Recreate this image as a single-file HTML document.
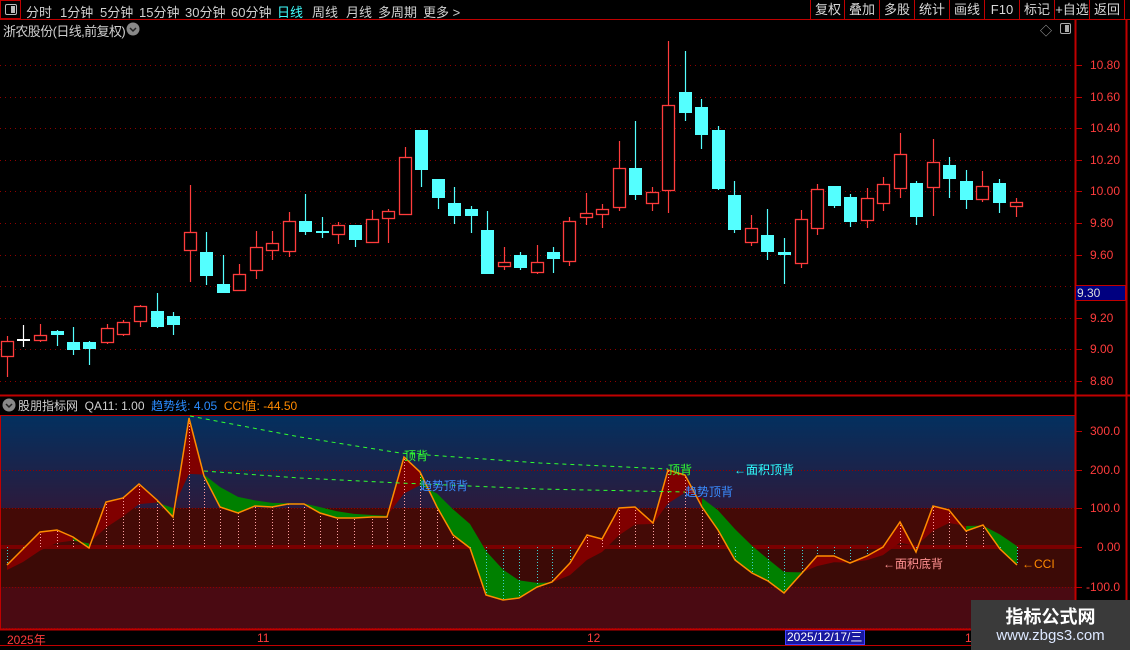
<!DOCTYPE html>
<html><head><meta charset="utf-8">
<style>
*{margin:0;padding:0;box-sizing:border-box}
body{width:1130px;height:650px;background:#000;overflow:hidden;position:relative;font-family:"Liberation Sans","Noto Sans CJK SC",sans-serif;font-size:13px;color:#c8c8c8}
.a{position:absolute;white-space:nowrap}
#top{position:absolute;left:0;top:0;width:1130px;height:20px;border-bottom:1px solid #c00000}
.mi{position:absolute;top:2px;font-size:13px;color:#d0d0d0}
.bt{position:absolute;top:0;height:19px;border-left:1px solid #c00000;text-align:center;font-size:13px;line-height:19px;color:#d8d8d8}
.pl{position:absolute;left:1090px;color:#ff3c3c;font-size:12px}
.il{position:absolute;left:1090px;color:#ff3c3c;font-size:12px}
</style></head><body>
<div id="top">
 <div class="a" style="left:0;top:0;width:21px;height:19px;border:1px solid #c00000"></div>
 <div class="a" style="left:5px;top:4px;width:12px;height:11px;border:1px solid #bbb;border-radius:2px"><div style="position:absolute;right:1px;top:1px;width:4px;height:7px;background:#bbb"></div></div>
 <span class="mi" style="left:26px">分时</span>
 <span class="mi" style="left:60px">1分钟</span>
 <span class="mi" style="left:100px">5分钟</span>
 <span class="mi" style="left:139px">15分钟</span>
 <span class="mi" style="left:185px">30分钟</span>
 <span class="mi" style="left:231px">60分钟</span>
 <span class="mi" style="left:277px;color:#40ffff">日线</span>
 <span class="mi" style="left:312px">周线</span>
 <span class="mi" style="left:346px">月线</span>
 <span class="mi" style="left:378px">多周期</span>
 <span class="mi" style="left:423px">更多 &gt;</span>
 <div class="bt" style="left:810px;width:35px">复权</div>
 <div class="bt" style="left:844px;width:35px">叠加</div>
 <div class="bt" style="left:879px;width:35px">多股</div>
 <div class="bt" style="left:914px;width:35px">统计</div>
 <div class="bt" style="left:949px;width:35px">画线</div>
 <div class="bt" style="left:984px;width:35px">F10</div>
 <div class="bt" style="left:1019px;width:35px">标记</div>
 <div class="bt" style="left:1054px;width:35px">+自选</div>
 <div class="bt" style="left:1089px;width:36px;border-right:1px solid #c00000">返回</div>
</div>
<div class="a" style="left:3px;top:21px;font-size:13px;color:#d0d0d0;letter-spacing:-0.6px">浙农股份(日线,前复权)</div>
<svg class="a" style="left:126px;top:22px" width="14" height="14"><circle cx="7" cy="7" r="6.5" fill="#888"/><polyline points="4,6 7,9 10,6" fill="none" stroke="#222" stroke-width="1.5"/></svg>
<div class="a" style="left:1040px;top:22px;color:#aaa;font-size:12px">◇</div>
<div class="a" style="left:1060px;top:23px;width:11px;height:11px;border:1px solid #aaa;border-radius:2px"><div style="position:absolute;right:1px;top:1px;width:4px;height:7px;background:#aaa"></div></div>

<svg class="a" style="left:0;top:0" width="1130" height="650" id="sv"></svg>

<div class="pl" style="top:58px">10.80</div>
<div class="pl" style="top:90px">10.60</div>
<div class="pl" style="top:121px">10.40</div>
<div class="pl" style="top:153px">10.20</div>
<div class="pl" style="top:184px">10.00</div>
<div class="pl" style="top:216px">9.80</div>
<div class="pl" style="top:248px">9.60</div>
<div class="pl" style="top:311px">9.20</div>
<div class="pl" style="top:342px">9.00</div>
<div class="pl" style="top:374px">8.80</div>
<div class="a" style="left:1075px;top:285px;width:51px;height:16px;background:#000080;border:1px solid #c00000;color:#ddd;font-size:12px;padding-left:1px;line-height:14px">9.30</div>

<svg class="a" style="left:2px;top:398px" width="14" height="14"><circle cx="7" cy="7" r="6.5" fill="#888"/><polyline points="4,6 7,9 10,6" fill="none" stroke="#222" stroke-width="1.5"/></svg>
<div class="a" style="left:18px;top:397px;font-size:12px;color:#d0d0d0">股朋指标网 &nbsp;QA11: 1.00 &nbsp;<span style="color:#2a8cff">趋势线: 4.05</span> &nbsp;<span style="color:#ff8a00">CCI值: -44.50</span></div>

<div class="il" style="top:424px">300.0</div>
<div class="il" style="top:463px">200.0</div>
<div class="il" style="top:501px">100.0</div>
<div class="il" style="top:540px;left:1097px">0.00</div>
<div class="il" style="top:580px;left:1086px">-100.0</div>

<div class="a" style="left:404px;top:447px;color:#30ff30;font-size:12px">顶背</div>
<div class="a" style="left:668px;top:461px;color:#30ff30;font-size:12px">顶背</div>
<div class="a" style="left:420px;top:477px;color:#3a8cff;font-size:12px">趋势顶背</div>
<div class="a" style="left:685px;top:483px;color:#3a8cff;font-size:12px">趋势顶背</div>
<div class="a" style="left:734px;top:461px;color:#30ffff;font-size:12px">←面积顶背</div>
<div class="a" style="left:883px;top:555px;color:#ff9090;font-size:12px">←面积底背</div>
<div class="a" style="left:1022px;top:557px;color:#ff8a00;font-size:12px">←CCI</div>

<div class="a" style="left:7px;top:631px;color:#ff3c3c;font-size:12px">2025年</div>
<div class="a" style="left:257px;top:631px;color:#ff3c3c;font-size:12px">11</div>
<div class="a" style="left:587px;top:631px;color:#ff3c3c;font-size:12px">12</div>
<div class="a" style="left:785px;top:630px;width:80px;height:15px;background:#1818a0;border:1px solid #4040ff;color:#fff;font-size:12px;line-height:13px;padding-left:1px">2025/12/17/三</div>
<div class="a" style="left:965px;top:631px;color:#ff3c3c;font-size:12px">1</div>

<div class="a" style="left:971px;top:600px;width:159px;height:50px;background:#3a3a3a"></div>
<div class="a" style="left:971px;top:603px;width:159px;text-align:center;color:#fff;font-size:18px;font-weight:bold">指标公式网</div>
<div class="a" style="left:971px;top:627px;width:159px;text-align:center;color:#dde8ff;font-size:15px">www.zbgs3.com</div>

<script>
var S=document.getElementById('sv'),h='';
function R(x,y,w,hh,f){h+='<rect x="'+x+'" y="'+y+'" width="'+w+'" height="'+hh+'" fill="'+f+'"/>';}
function L(x1,y1,x2,y2,c,w,d){h+='<line x1="'+x1+'" y1="'+y1+'" x2="'+x2+'" y2="'+y2+'" stroke="'+c+'" stroke-width="'+(w||1)+'"'+(d?' stroke-dasharray="'+d+'"':'')+'/>';}
h+='<defs><linearGradient id="g" x1="0" y1="0" x2="0" y2="1"><stop offset="0" stop-color="#03305f"/><stop offset="1" stop-color="#2c1a3c"/></linearGradient></defs>';
R(0,416,1075,92,'url(#g)');R(0,508,1075,39,'#440a06');R(0,547,1075,40,'#3c0a06');R(0,587,1075,42,'#4a0a12');
R(0,545,1075,4,'#7a0000');
[65,97,128,160,191,223,255,286,318,349,381].forEach(function(y){L(0,y+.5,1075,y+.5,'#900000',1,'1 4');});
[470,508,587,628].forEach(function(y){L(0,y+.5,1075,y+.5,'#900000',1,'1 2');});
L(1075.5,20,1075.5,650,'#c00000',2);L(1126.5,20,1126.5,650,'#c00000',2);
L(0,395.5,1130,395.5,'#c00000',2);L(0,415.5,1075,415.5,'#c00000',1);
L(0,629.5,1130,629.5,'#c00000',2);L(0,645.5,1130,645.5,'#c00000',1);
L(0.5,416,0.5,630,'#c00000',1);
[431,470,508,547,587].forEach(function(y){L(1075,y+.5,1082,y+.5,'#c00000',1)});
[65,97,128,160,191,223,255,286,318,349,381].forEach(function(y){L(1075,y+.5,1082,y+.5,'#c00000',1)});
var C=[[7,'r',341,356,336,377],[23,'w',339,340,325,347],[40,'r',335,340,324,342],[57,'c',331,335,330,346],[73,'c',342,350,327,355],[89,'c',342,349,341,365],[107,'r',328,342,324,344],[123,'r',322,334,320,336],[140,'r',306,321,305,327],[157,'c',311,327,293,328],[173,'c',316,325,312,335],[190,'r',232,250,185,282],[206,'c',252,276,232,285],[223,'c',284,293,255,293],[239,'r',274,290,264,290],[256,'r',247,270,231,279],[272,'r',243,250,231,260],[289,'r',221,251,212,257],[305,'c',221,232,194,235],[322,'c',231,233,217,238],[338,'r',225,234,222,244],[355,'c',225,240,225,247],[372,'r',219,242,210,242],[388,'r',211,218,209,243],[405,'r',157,214,147,214],[421,'c',130,170,130,187],[438,'c',179,198,179,209],[454,'c',203,216,187,224],[471,'c',209,216,206,233],[487,'c',230,274,211,274],[504,'r',262,266,247,270],[520,'c',255,268,252,270],[537,'r',262,272,245,274],[553,'c',252,259,247,273],[569,'r',221,261,217,266],[586,'r',213,217,193,225],[602,'r',209,214,204,228],[619,'r',168,207,141,211],[635,'c',168,195,121,200],[652,'r',192,203,187,211],[668,'r',105,190,41,213],[685,'c',92,113,51,121],[701,'c',107,135,99,149],[718,'c',130,189,126,190],[734,'c',195,230,181,233],[751,'r',228,242,215,246],[767,'c',235,252,209,260],[784,'c',252,255,238,284],[801,'r',219,263,210,268],[817,'r',189,228,184,235],[834,'c',186,206,186,208],[850,'c',197,222,194,227],[867,'r',198,220,188,228],[883,'r',184,203,177,211],[900,'r',154,188,133,198],[916,'c',183,217,181,225],[933,'r',162,187,139,216],[949,'c',165,179,157,198],[966,'c',181,200,170,209],[982,'r',186,199,171,202],[999,'c',183,203,179,213],[1016,'r',202,206,198,217]];
C.forEach(function(c){var x=c[0],col=c[1]=='r'?'#ff3c3c':(c[1]=='c'?'#54ffff':'#ffffff');
 if(c[1]=='r'){L(x+.5,c[4],x+.5,c[2],col,1.2);L(x+.5,c[3],x+.5,c[5],col,1.2);
  h+='<rect x="'+(x-5.5)+'" y="'+(c[2]+.5)+'" width="12" height="'+Math.max(c[3]-c[2],1)+'" fill="#000" stroke="'+col+'" stroke-width="1.3"/>';}
 else{L(x+.5,c[4],x+.5,c[5],col,1.2);R(x-6,c[2],13,Math.max(c[3]-c[2],2),col);}
});
var P=[[7,565],[23,549],[40,532],[57,530],[73,537],[89,548],[106,502],[123,498],[139,484],[157,500],[173,517],[189,418],[204,476],[220,507],[238,513],[255,506],[272,507],[288,504],[304,504],[320,513],[337,518],[354,518],[372,517],[387,517],[404,457],[420,472],[437,507],[453,535],[470,548],[486,595],[503,600],[519,598],[537,587],[552,582],[570,563],[587,535],[602,539],[619,508],[635,507],[653,523],[668,470],[685,475],[702,507],[718,530],[735,560],[752,573],[768,581],[784,593],[802,573],[817,556],[834,556],[850,563],[867,556],[883,547],[900,522],[916,552],[933,506],[949,510],[966,531],[983,525],[1000,549],[1017,565]];
var T=[],t=P[0][1];P.forEach(function(p,i){t=i==0?p[1]+5:t+(p[1]-t)*0.38;T.push(t);});
for(var i=0;i<P.length-1;i++){var a=P[i],b=P[i+1];var m=(a[1]+b[1])/2-(T[i]+T[i+1])/2;
 h+='<polygon points="'+a[0]+','+a[1]+' '+b[0]+','+b[1]+' '+b[0]+','+T[i+1]+' '+a[0]+','+T[i]+'" fill="'+(m<0?'#800000':'#008000')+'"/>';}
P.forEach(function(p){L(p[0]+.5,547,p[0]+.5,p[1],p[1]<547?'#ffa0a0':'#40d0d0',1,'1 2');});
var pts=P.map(function(p){return p.join(',')}).join(' ');
h+='<polyline points="'+pts+'" fill="none" stroke="#ff8c00" stroke-width="1.5"/>';
h+='<polyline points="190,416 300,437 400,453 540,463 668,469" fill="none" stroke="#30ff30" stroke-width="1" stroke-dasharray="4 4"/>';
h+='<polyline points="204,471 300,478 400,483 540,489 685,492" fill="none" stroke="#30ff30" stroke-width="1" stroke-dasharray="4 4"/>';
S.innerHTML=h;
</script>
</body></html>
